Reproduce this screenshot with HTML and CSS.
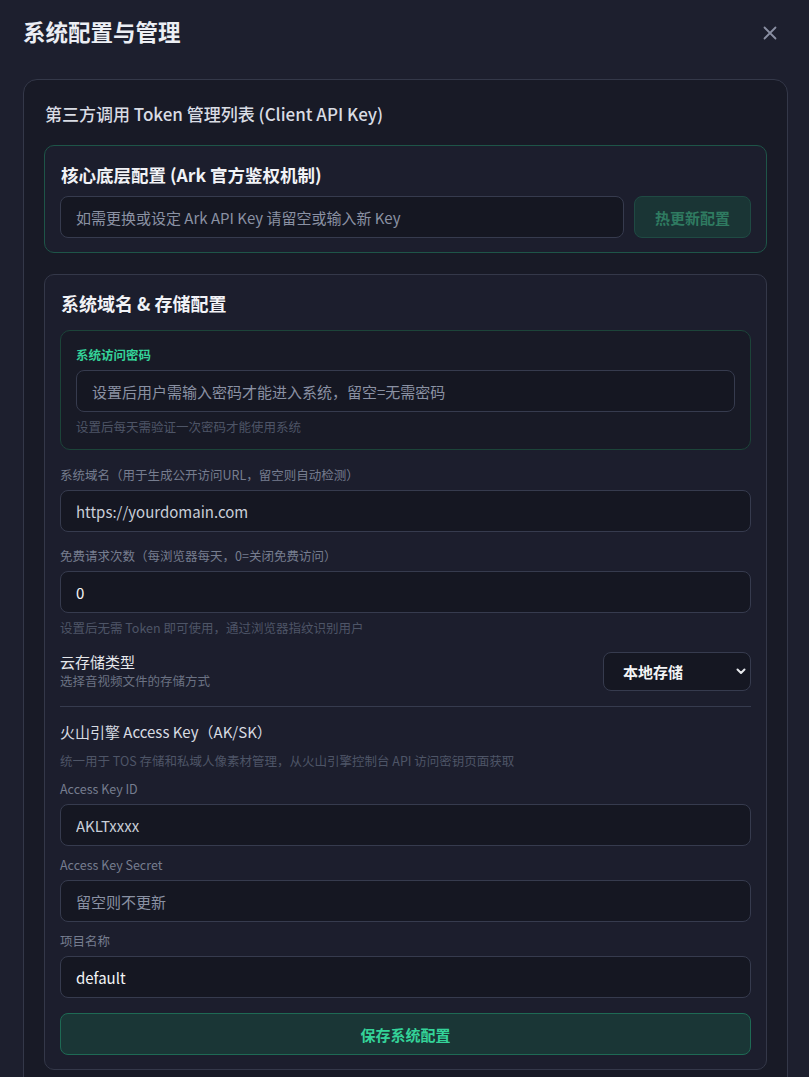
FILE: index.html
```html
<!DOCTYPE html>
<html lang="zh-CN">
<head>
    <meta charset="UTF-8">
    <meta name="viewport" content="width=device-width, initial-scale=1.0">
    <title>系统配置与管理</title>
    <link rel="stylesheet" href="styles.css">
</head>
<body>
    <div class="modal-header">
        <h1 class="modal-title">系统配置与管理</h1>
        <button class="close-btn" aria-label="关闭">
            <svg width="14" height="14" viewBox="0 0 14 14"><path d="M1.5 1.5L12.5 12.5M12.5 1.5L1.5 12.5" stroke="#8a8fa3" stroke-width="1.8" stroke-linecap="round"/></svg>
        </button>
    </div>

    <div class="card">
        <h2 class="card-heading">第三方调用 Token 管理列表 (Client API Key)</h2>

        <!-- Ark key -->
        <div class="core-box">
            <h3 class="box-title">核心底层配置 (Ark 官方鉴权机制)</h3>
            <div class="inline-row">
                <input class="text-input" type="text" placeholder="如需更换或设定 Ark API Key 请留空或输入新 Key">
                <button class="hot-btn">热更新配置</button>
            </div>
        </div>

        <!-- domain & storage -->
        <div class="section-box">
            <h3 class="box-title section-title">系统域名 &amp; 存储配置</h3>

            <div class="password-box">
                <div class="green-label">系统访问密码</div>
                <input class="text-input" type="password" placeholder="设置后用户需输入密码才能进入系统，留空=无需密码">
                <div class="hint">设置后每天需验证一次密码才能使用系统</div>
            </div>

            <label class="field-label first">系统域名（用于生成公开访问URL，留空则自动检测）</label>
            <input class="text-input" type="text" value="https://yourdomain.com">

            <label class="field-label">免费请求次数（每浏览器每天，0=关闭免费访问）</label>
            <input class="text-input strong" type="number" value="0">
            <div class="hint">设置后无需 Token 即可使用，通过浏览器指纹识别用户</div>

            <div class="storage-row">
                <div>
                    <div class="row-title">云存储类型</div>
                    <div class="row-sub">选择音视频文件的存储方式</div>
                </div>
                <div class="select-wrap">
                    <select class="select">
                        <option>本地存储</option>
                        <option>火山引擎 TOS</option>
                    </select>
                    <svg class="chevron" width="12" height="12" viewBox="0 0 12 12"><path d="M2.5 4.5L6 8L9.5 4.5" fill="none" stroke="#e5e7eb" stroke-width="2" stroke-linecap="round" stroke-linejoin="round"/></svg>
                </div>
            </div>

            <div class="divider"></div>

            <div class="row-title ak-title">火山引擎 Access Key（AK/SK）</div>
            <div class="hint ak-hint">统一用于 TOS 存储和私域人像素材管理，从火山引擎控制台 API 访问密钥页面获取</div>

            <label class="field-label small-gap">Access Key ID</label>
            <input class="text-input" type="text" value="AKLTxxxx">

            <label class="field-label small-gap">Access Key Secret</label>
            <input class="text-input" type="password" placeholder="留空则不更新">

            <label class="field-label small-gap">项目名称</label>
            <input class="text-input strong" type="text" value="default">

            <button class="save-btn">保存系统配置</button>
        </div>
    </div>
</body>
</html>
```

FILE: styles.css
```css
* {
    box-sizing: border-box;
}
body {
    margin: 0;
    background-color: #1d1f2e;
    font-family: "Noto Sans CJK SC", "Noto Sans", sans-serif;
    color: #e5e7eb;
}
.modal-header {
    height: 61px;
    padding: 0 23px;
    display: flex;
    align-items: center;
    justify-content: space-between;
    margin-bottom: 18px;
}
.modal-title {
    margin: 0;
    font-size: 22.5px;
    font-weight: 700;
    color: #eceef4;
    line-height: 30px;
}
.close-btn {
    background: none;
    border: none;
    padding: 0;
    width: 14px;
    height: 14px;
    margin-right: 9px;
    margin-top: 4px;
    cursor: pointer;
}
.card {
    margin: 0 21px 0 23px;
    background-color: #181a26;
    border: 1px solid #343849;
    border-radius: 14px;
    padding: 22px 20px 20px;
}
.card-heading {
    margin: 0 0 19px 1px;
    font-size: 17px;
    font-weight: 500;
    line-height: 24px;
    color: #d9dce4;
}
.core-box {
    background-color: #1c1e2d;
    border: 1px solid #1e5548;
    border-radius: 10px;
    padding: 17px 15px 14px;
    margin-bottom: 21px;
}
.box-title {
    margin: 0 0 9px 1px;
    font-size: 17.5px;
    font-weight: 700;
    line-height: 24px;
    color: #f1f2f6;
}
.inline-row {
    display: flex;
    gap: 10px;
}
.text-input {
    display: block;
    width: 100%;
    height: 42px;
    background-color: #151722;
    border: 1px solid #363b4e;
    border-radius: 8px;
    padding: 0 15px;
    font-family: inherit;
    font-size: 15px;
    color: #c9ced8;
    outline: none;
}
.text-input::placeholder {
    color: #8a91a3;
}
.text-input.strong {
    color: #f3f4f6;
}
.hot-btn {
    flex: 0 0 117px;
    height: 42px;
    background-color: #1a3535;
    border: 1px solid #1f4a43;
    border-radius: 8px;
    font-family: inherit;
    font-size: 15px;
    font-weight: 700;
    color: #2f7b61;
}
.section-box {
    background-color: #1c1e2d;
    border: 1px solid #343849;
    border-radius: 10px;
    padding: 16px 15px 14px;
}
.section-title {
    font-size: 18px;
    margin-bottom: 15px;
}
.password-box {
    background-color: #181a26;
    border: 1px solid #1c4439;
    border-radius: 10px;
    padding: 15px 15px 13px;
}
.green-label {
    font-size: 12.5px;
    font-weight: 700;
    line-height: 18px;
    color: #34d399;
    margin-bottom: 6px;
}
.hint {
    font-size: 12.5px;
    line-height: 18px;
    color: #4e5567;
    margin-top: 6px;
}
.field-label {
    display: block;
    font-size: 12.5px;
    line-height: 18px;
    color: #767d8f;
    margin: 15px 0 6px;
}
.field-label.first {
    margin-top: 16px;
}
.field-label.small-gap {
    margin-top: 10px;
}
.storage-row {
    display: flex;
    justify-content: space-between;
    align-items: flex-start;
    margin-top: 15px;
}
.row-title {
    font-size: 15px;
    line-height: 20px;
    color: #e5e7eb;
}
.row-sub {
    font-size: 12.5px;
    line-height: 18px;
    color: #6b7283;
}
.select-wrap {
    position: relative;
    width: 148px;
}
.select {
    appearance: none;
    -webkit-appearance: none;
    width: 100%;
    height: 39px;
    background-color: #151722;
    border: 1px solid #363b4e;
    border-radius: 8px;
    padding: 0 19px;
    font-family: inherit;
    font-size: 15px;
    font-weight: 700;
    color: #f3f4f6;
    outline: none;
}
.chevron {
    position: absolute;
    right: 4px;
    top: 13px;
    pointer-events: none;
}
.divider {
    height: 1px;
    background-color: #363b4e;
    margin: 15px 0 0;
}
.ak-title {
    margin-top: 15px;
    color: #d8dbe2;
}
.ak-hint {
    margin-top: 10px;
}
.save-btn {
    display: block;
    width: 100%;
    height: 42px;
    margin-top: 15px;
    background-color: #1a3636;
    border: 1px solid #1e6a54;
    border-radius: 8px;
    font-family: inherit;
    font-size: 15px;
    font-weight: 700;
    color: #34d399;
    cursor: pointer;
}
```
